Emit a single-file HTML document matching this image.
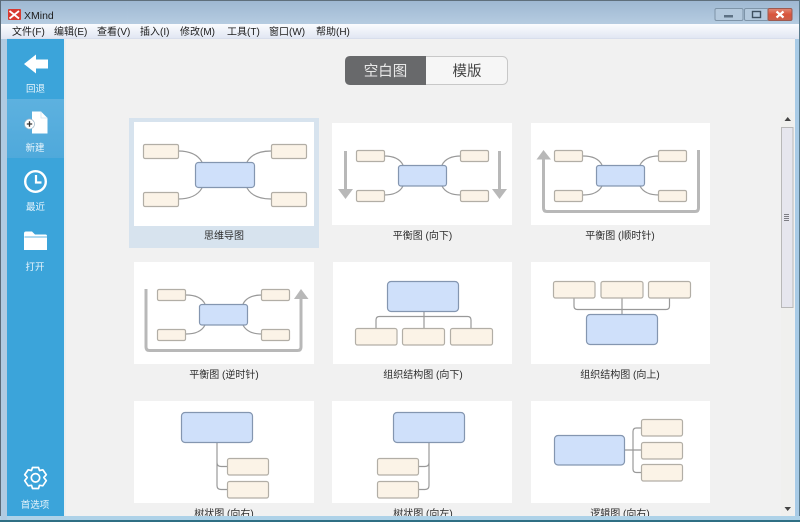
<!DOCTYPE html>
<html><head><meta charset="utf-8"><style>
html,body{margin:0;padding:0;width:800px;height:522px;overflow:hidden;background:#f1f1f1}
svg{display:block;position:absolute;left:0;top:0;filter:blur(.35px)}
text{font-family:"Liberation Sans","Noto Sans CJK SC",sans-serif;font-size:10px;fill:#333}
.m{fill:#1c1c1c}
.s{fill:#e9f5fc;text-anchor:middle;font-size:9.500px}
.l{text-anchor:middle;fill:#2c2c2c}
.n{fill:#fbf3e7;stroke:#b2aea6;stroke-width:1.200}
.c{fill:#cfe0fa;stroke:#8496b0;stroke-width:1.200}
.w{fill:none;stroke:#999;stroke-width:1.200}
.g{fill:none;stroke:#b8b8b8;stroke-width:3}
.h{fill:#b8b8b8}
</style></head><body>
<svg width="800" height="522" viewBox="0 0 800 522" xmlns="http://www.w3.org/2000/svg">
<defs>
<linearGradient id="tt" x1="0" y1="0" x2="0" y2="1"><stop offset="0" stop-color="#9fb8d2"/><stop offset="1" stop-color="#b6cce1"/></linearGradient>
<linearGradient id="me" x1="0" y1="0" x2="0" y2="1"><stop offset="0" stop-color="#fbfcfe"/><stop offset="1" stop-color="#dfe5f2"/></linearGradient>
<linearGradient id="nw" x1="0" y1="0" x2="0" y2="1"><stop offset="0" stop-color="#5db1df"/><stop offset="1" stop-color="#4fa9db"/></linearGradient>
<linearGradient id="cl" x1="0" y1="0" x2="0" y2="1"><stop offset="0" stop-color="#e08a78"/><stop offset=".5" stop-color="#d9543c"/><stop offset="1" stop-color="#c9604c"/></linearGradient>
</defs>

<!-- window frame -->
<rect width="800" height="522" fill="#a9c5dd"/>
<rect x="0" y="0" width="800" height="1" fill="#5f6f7c"/>
<rect x="0" y="0" width="1" height="522" fill="#5a6a78"/>
<rect x="799" y="0" width="1" height="522" fill="#5a7a8c"/>
<rect x="1" y="1" width="798" height="23" fill="url(#tt)"/>
<rect x="1" y="39" width="6" height="483" fill="#b0cbe2"/>
<rect x="795" y="39" width="4" height="483" fill="#a8cbe6"/>

<!-- logo -->
<rect x="8" y="9" width="13" height="11" rx="1" fill="#d8392f"/>
<path d="M9.500 11L19 18.500M19 11L9.500 18.500" stroke="#fff" stroke-width="1.800" fill="none"/>
<text x="24" y="19" style="font-size:10.500px;fill:#1c1c1c">XMind</text>

<!-- window buttons -->
<rect x="715" y="8.500" width="28" height="12" rx="1.500" fill="#b4c9dd" stroke="#7e94a8"/>
<rect x="724" y="15" width="9" height="2.500" fill="#5d7184"/>
<rect x="744.500" y="8.500" width="24" height="12" rx="1.500" fill="#b4c9dd" stroke="#7e94a8"/>
<rect x="752.500" y="11.500" width="8" height="6" fill="none" stroke="#3f5060" stroke-width="1.400"/>
<rect x="768" y="8.500" width="24" height="12" rx="1.500" fill="url(#cl)" stroke="#9d5a50"/>
<path d="M776.500 11.500L783.500 17.500M783.500 11.500L776.500 17.500" stroke="#fff" stroke-width="2.200"/>

<!-- menu -->
<rect x="1" y="24" width="798" height="15" fill="url(#me)"/>
<rect x="7" y="38.500" width="788" height="1" fill="#cfd5e6"/>
<text class="m" x="12" y="35">文件(F)</text>
<text class="m" x="54" y="35">编辑(E)</text>
<text class="m" x="97" y="35">查看(V)</text>
<text class="m" x="140" y="35">插入(I)</text>
<text class="m" x="180" y="35">修改(M)</text>
<text class="m" x="227" y="35">工具(T)</text>
<text class="m" x="269" y="35">窗口(W)</text>
<text class="m" x="316" y="35">帮助(H)</text>

<!-- content -->
<rect x="64" y="39" width="731" height="477" fill="#f1f1f1"/>
<rect x="64" y="39" width="2" height="477" fill="#e9eef0"/>

<!-- sidebar -->
<rect x="7" y="39" width="57" height="477" fill="#3ba4da"/>
<rect x="7" y="99" width="57" height="59" fill="url(#nw)"/>
<path d="M24 64L36 54.500V59.500H48V68.500H36V73.500Z" fill="#fff"/>
<text class="s" x="35.500" y="92">回退</text>
<path d="M32 111.500H41L47.500 118V133.500H32Z" fill="#fff"/>
<path d="M41 111.500V118H47.500" fill="none" stroke="#cfe3f0" stroke-width=".8"/>
<circle cx="29.500" cy="124" r="5" fill="#fff" stroke="#9fb8c8" stroke-width=".7"/>
<path d="M26.800 124H32.200M29.500 121.300V126.700" stroke="#333" stroke-width="1.300"/>
<text class="s" x="35" y="151">新建</text>
<circle cx="35.500" cy="181.500" r="10.300" fill="none" stroke="#fff" stroke-width="2.400"/>
<path d="M36 175V182.500H41.500" fill="none" stroke="#fff" stroke-width="2.200"/>
<text class="s" x="35.500" y="210">最近</text>
<path d="M24 250V233.500Q24 231.500 26 231.500H32L35 234.500H45.500Q47 234.500 47 236V250Z" fill="#fff"/>
<path d="M24.500 237H47" stroke="#62b4e0" stroke-width="1"/>
<text class="s" x="35" y="270">打开</text>
<g transform="translate(35.500,478)">
<path d="M-3 -10.500H3L4 -7.500L7.300 -8.200L10.800 -3.300L8.300 -0.500L10.800 2.700L7.300 7.800L4 7.300L3 10.500H-3L-4 7.300L-7.300 7.800L-10.800 2.700L-8.300 -0.500L-10.800 -3.300L-7.300 -8.200L-4 -7.500Z" fill="none" stroke="#fff" stroke-width="1.700" stroke-linejoin="round"/>
<circle cx="0" cy="-0.200" r="4.200" fill="none" stroke="#fff" stroke-width="1.700"/>
</g>
<text class="s" x="35" y="508">首选项</text>

<!-- segmented -->
<rect x="345.500" y="56.500" width="162" height="28" rx="5" fill="#f6f6f6" stroke="#c8c8c8"/>
<path d="M426 56H350.500Q345 56 345 61.500V79.500Q345 85 350.500 85H426Z" fill="#68696b"/>
<text x="385.500" y="76" style="font-size:14.500px;text-anchor:middle;fill:#e8e8e8">空白图</text>
<text x="467" y="76" style="font-size:14.500px;text-anchor:middle;fill:#444">模版</text>

<!-- selected card -->
<rect x="129" y="118" width="190" height="130" fill="#d7e3ee"/>
<rect x="134" y="122" width="180" height="104" fill="#fff"/>
<text class="l" x="224" y="239">思维导图</text>

<!-- other cards -->
<rect x="332" y="123" width="180" height="102" fill="#fff"/>
<rect x="531" y="123" width="179" height="102" fill="#fff"/>
<rect x="134" y="262" width="180" height="102" fill="#fff"/>
<rect x="333" y="262" width="179" height="102" fill="#fff"/>
<rect x="531" y="262" width="179" height="102" fill="#fff"/>
<rect x="134" y="401" width="180" height="102" fill="#fff"/>
<rect x="332" y="401" width="180" height="102" fill="#fff"/>
<rect x="531" y="401" width="179" height="102" fill="#fff"/>

<text class="l" x="422.500" y="239">平衡图 (向下)</text>
<text class="l" x="620" y="239">平衡图 (顺时针)</text>
<text class="l" x="224" y="378">平衡图 (逆时针)</text>
<text class="l" x="423" y="378">组织结构图 (向下)</text>
<text class="l" x="620" y="378">组织结构图 (向上)</text>
<text class="l" x="224" y="517">树状图 (向右)</text>
<text class="l" x="423" y="517">树状图 (向左)</text>
<text class="l" x="620" y="517">逻辑图 (向右)</text>

<!-- card 1 map -->
<path class="w" d="M178 151C190 151 198 155 202 162M178 199C190 199 198 195 202 188M271 151C259 151 251 155 247 162M271 199C259 199 251 195 247 188"/>
<rect class="c" x="195.500" y="162.500" width="59" height="25" rx="3"/>
<rect class="n" x="143.500" y="144.500" width="35" height="14" rx="1.500"/>
<rect class="n" x="143.500" y="192.500" width="35" height="14" rx="1.500"/>
<rect class="n" x="271.500" y="144.500" width="35" height="14" rx="1.500"/>
<rect class="n" x="271.500" y="192.500" width="35" height="14" rx="1.500"/>

<!-- card 2 -->
<path class="w" d="M384 156C394 156 400 159 403 165M384 195C394 195 400 192 403 186M461 156C451 156 445 159 442 165M461 195C451 195 445 192 442 186"/>
<rect class="c" x="398.500" y="165.500" width="48" height="20.500" rx="2.500"/>
<rect class="n" x="356.500" y="150.500" width="28" height="11" rx="1.500"/>
<rect class="n" x="356.500" y="190.500" width="28" height="11" rx="1.500"/>
<rect class="n" x="460.500" y="150.500" width="28" height="11" rx="1.500"/>
<rect class="n" x="460.500" y="190.500" width="28" height="11" rx="1.500"/>
<path class="g" d="M345.500 151V190M499.500 151V190"/>
<path class="h" d="M338 189H353L345.500 199ZM492 189H507L499.500 199Z"/>

<!-- card 3 -->
<path class="w" d="M583 156C593 156 599 159 602 165M583 195C593 195 599 192 602 186M659 156C649 156 643 159 640 165M659 195C649 195 643 192 640 186"/>
<rect class="c" x="596.500" y="165.500" width="48" height="20.500" rx="2.500"/>
<rect class="n" x="554.500" y="150.500" width="28" height="11" rx="1.500"/>
<rect class="n" x="554.500" y="190.500" width="28" height="11" rx="1.500"/>
<rect class="n" x="658.500" y="150.500" width="28" height="11" rx="1.500"/>
<rect class="n" x="658.500" y="190.500" width="28" height="11" rx="1.500"/>
<path class="g" d="M543.500 158V208Q543.500 211.500 547 211.500H695Q698.500 211.500 698.500 208V150"/>
<path class="h" d="M536.500 159.500H551L543.500 150Z"/>

<!-- row 2 card 1 -->
<path class="w" d="M186 295C196 295 202 298 205 304M186 334C196 334 202 331 205 325M262 295C252 295 246 298 243 304M262 334C252 334 246 331 243 325"/>
<rect class="c" x="199.500" y="304.500" width="48" height="20.500" rx="2.500"/>
<rect class="n" x="157.500" y="289.500" width="28" height="11" rx="1.500"/>
<rect class="n" x="157.500" y="329.500" width="28" height="11" rx="1.500"/>
<rect class="n" x="261.500" y="289.500" width="28" height="11" rx="1.500"/>
<rect class="n" x="261.500" y="329.500" width="28" height="11" rx="1.500"/>
<path class="g" d="M146 289V347Q146 350.500 149.500 350.500H297.500Q301 350.500 301 347V297"/>
<path class="h" d="M294 299H308.500L301 289Z"/>

<!-- org down -->
<path class="w" d="M424 312V328M376 328V320Q376 316.500 379.500 316.500H467.500Q471 316.500 471 320V328"/>
<rect class="c" x="387.500" y="281.500" width="71" height="30" rx="3.500"/>
<rect class="n" x="355.500" y="328.500" width="41.500" height="16.500" rx="2"/>
<rect class="n" x="402.500" y="328.500" width="42" height="16.500" rx="2"/>
<rect class="n" x="450.500" y="328.500" width="42" height="16.500" rx="2"/>

<!-- org up -->
<path class="w" d="M622 298V314M574 298V306Q574 309.500 577.500 309.500H666Q669.500 309.500 669.500 306V298"/>
<rect class="n" x="553.500" y="281.500" width="41.500" height="16.500" rx="2"/>
<rect class="n" x="601" y="281.500" width="42" height="16.500" rx="2"/>
<rect class="n" x="648.500" y="281.500" width="42" height="16.500" rx="2"/>
<rect class="c" x="586.500" y="314.500" width="71" height="30" rx="3.500"/>

<!-- tree right -->
<path class="w" d="M217 442V485.500Q217 489.500 221 489.500H228M217 462.500Q217 466.500 221 466.500H228"/>
<rect class="c" x="181.500" y="412.500" width="71" height="30" rx="3.500"/>
<rect class="n" x="227.500" y="458.500" width="41" height="16.500" rx="2"/>
<rect class="n" x="227.500" y="481.500" width="41" height="16.500" rx="2"/>

<!-- tree left -->
<path class="w" d="M429 442V485.500Q429 489.500 425 489.500H418M429 462.500Q429 466.500 425 466.500H418"/>
<rect class="c" x="393.500" y="412.500" width="71" height="30" rx="3.500"/>
<rect class="n" x="377.500" y="458.500" width="41" height="16.500" rx="2"/>
<rect class="n" x="377.500" y="481.500" width="41" height="16.500" rx="2"/>

<!-- logic -->
<path class="w" d="M625 450H641M641 428H636.500Q633 428 633 431.500V469Q633 472.500 636.500 472.500H641"/>
<rect class="c" x="554.500" y="435.500" width="70" height="29.500" rx="3.500"/>
<rect class="n" x="641.500" y="419.500" width="41" height="16.500" rx="2"/>
<rect class="n" x="641.500" y="442.500" width="41" height="16.500" rx="2"/>
<rect class="n" x="641.500" y="464.500" width="41" height="16.500" rx="2"/>

<!-- bottom frame covers clipped labels -->
<rect x="0" y="516" width="800" height="4" fill="#aed2e8"/>
<rect x="0" y="520" width="800" height="2" fill="#2f6f84"/>
<rect x="1" y="516" width="6" height="4" fill="#b0cbe2"/>

<!-- scrollbar -->
<rect x="781" y="112" width="13" height="404" fill="#f0f0ee"/>
<path d="M784.500 121H791L787.700 117Z" fill="#444"/>
<rect x="781.500" y="127.500" width="11.500" height="180" fill="#e6e6ee" stroke="#b8b8b8"/>
<path d="M784 214.500H789M784 216.500H789M784 218.500H789M784 220.500H789" stroke="#7d7d84" stroke-width="1"/>
<path d="M784.500 507H791L787.700 511Z" fill="#444"/>
</svg>
</body></html>
